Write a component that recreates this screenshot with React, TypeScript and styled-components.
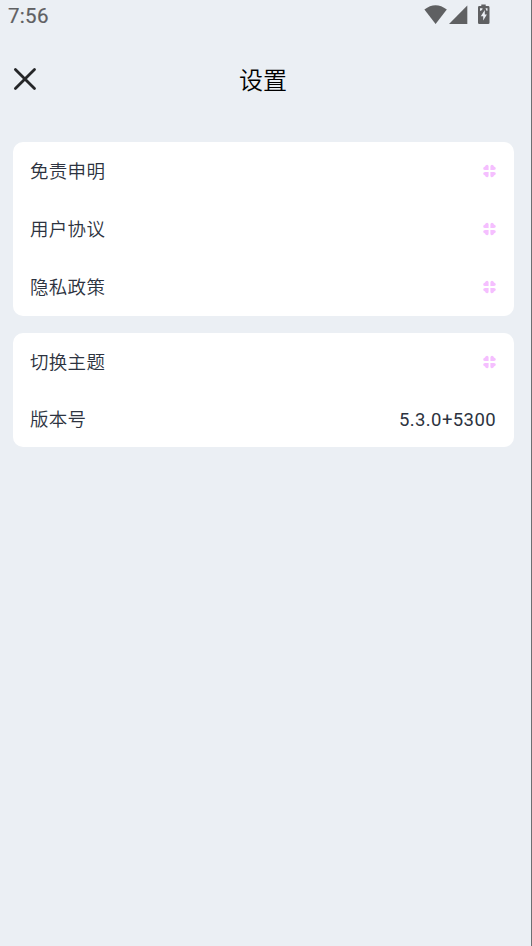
import React from 'react';
import styled, { createGlobalStyle } from 'styled-components';

const GlobalStyle = createGlobalStyle`
  * { box-sizing: border-box; }
  body {
    margin: 0;
    background: #ebeff4;
    font-family: Roboto, "Noto Sans CJK SC", sans-serif;
  }
`;

const Screen = styled.div`
  height: 946px;
  background: #ebeff4;
  border-right: 1px solid #6c6f72;
  overflow: hidden;
`;

const StatusBar = styled.header`
  display: flex;
  justify-content: space-between;
  height: 32px;
  padding: 0 39px 0 8px;
  color: #5f6062;
`;

const Clock = styled.span`
  font-size: 20.5px;
  font-weight: 400;
  line-height: 32px;
  letter-spacing: 0.3px;
  -webkit-text-stroke: 0.2px currentColor;
`;

const StatusIcons = styled.svg`
  width: 68px;
  height: 28px;
  fill: currentColor;
`;

const TitleBar = styled.div`
  display: grid;
  grid-template-columns: 50px 1fr 50px;
  align-items: center;
  height: 94px;
  padding-right: 5px;
`;

const CloseButton = styled.button`
  width: 50px;
  height: 94px;
  padding: 0;
  border: 0;
  background: none;
`;

const CloseIcon = styled.svg`
  display: block;
  width: 50px;
  height: 94px;
  stroke: #252628;
  stroke-width: 2.8;
  stroke-linecap: round;
`;

const Title = styled.h1`
  margin: 0;
  color: #000;
  font-family: "Noto Sans CJK SC", sans-serif;
  font-size: 24px;
  font-weight: 350;
  line-height: 94px;
  text-align: center;
`;

const Sections = styled.main`
  display: flex;
  flex-direction: column;
  gap: 17px;
  padding: 16px 17px 0 13px;
`;

const Card = styled.section<{ $height: number }>`
  display: grid;
  grid-auto-rows: 1fr;
  height: ${(p) => p.$height}px;
  padding: 0 18px 0 17px;
  border-radius: 10px;
  background: #fff;
`;

const Row = styled.div`
  display: flex;
  align-items: center;
  justify-content: space-between;
  color: #2d3340;
`;

const Label = styled.span`
  padding-bottom: 2px;
  font-family: "Noto Sans CJK SC", sans-serif;
  font-size: 18.5px;
  font-weight: 350;
  line-height: 26px;
  letter-spacing: 0.3px;
`;

const Version = styled.span`
  padding-top: 3px;
  line-height: 22px;
  font-size: 18.5px;
  letter-spacing: 0.4px;
`;

const Clover = styled.svg`
  width: 14px;
  height: 14px;
  fill: #f5bfff;
`;

const CloverIcon = () => (
  <Clover viewBox="0 0 14 14">
    {[0, 90, 180, 270].map((angle) => (
      <path
        key={angle}
        transform={`translate(.5 0) rotate(${angle} 7 7)`}
        d="M6.1 6.1H2.6Q.7 6 .7 4.5Q.7 3 2.5 2.5Q3 .7 4.6.7Q6 .7 6.1 2.6Z"
      />
    ))}
  </Clover>
);

const groups = [
  { height: 174, rows: [{ label: '免责申明' }, { label: '用户协议' }, { label: '隐私政策' }] },
  { height: 114, rows: [{ label: '切换主题' }, { label: '版本号', value: '5.3.0+5300' }] },
] as { height: number; rows: { label: string; value?: string }[] }[];

export default function App() {
  return (
    <>
      <GlobalStyle />
      <Screen>
        <StatusBar>
          <Clock>7:56</Clock>
          <StatusIcons viewBox="0 0 68 28">
            <path d="M.4 9.5Q11.5 1 22.8 9.5L11.6 24Z" />
            <path d="M25 24 43.3 5.6V24Z" />
            <path
              fillRule="evenodd"
              d="M57.3 4.5H61.7V6.1H64.2Q65.5 6.1 65.5 7.4V22.7Q65.5 24 64.2 24H55.2Q54 24 54 22.7V7.4Q54 6.1 55.2 6.1H57.3ZM60.8 10 56.8 16.2H59.2V20.6L62.9 14.4H60.8ZM56 8.3H58.5V9.3L57 10.8H56ZM61.5 8.3H63.5V10.8H62.5Z"
            />
          </StatusIcons>
        </StatusBar>
        <TitleBar>
          <CloseButton aria-label="关闭">
            <CloseIcon viewBox="0 0 50 94">
              <path d="M15.4 37.4 34.5 56.5M34.5 37.4 15.4 56.5" />
            </CloseIcon>
          </CloseButton>
          <Title>设置</Title>
        </TitleBar>
        <Sections>
          {groups.map((group) => (
            <Card key={group.height} $height={group.height}>
              {group.rows.map((row) => (
                <Row key={row.label}>
                  <Label>{row.label}</Label>
                  {row.value ? <Version>{row.value}</Version> : <CloverIcon />}
                </Row>
              ))}
            </Card>
          ))}
        </Sections>
      </Screen>
    </>
  );
}
